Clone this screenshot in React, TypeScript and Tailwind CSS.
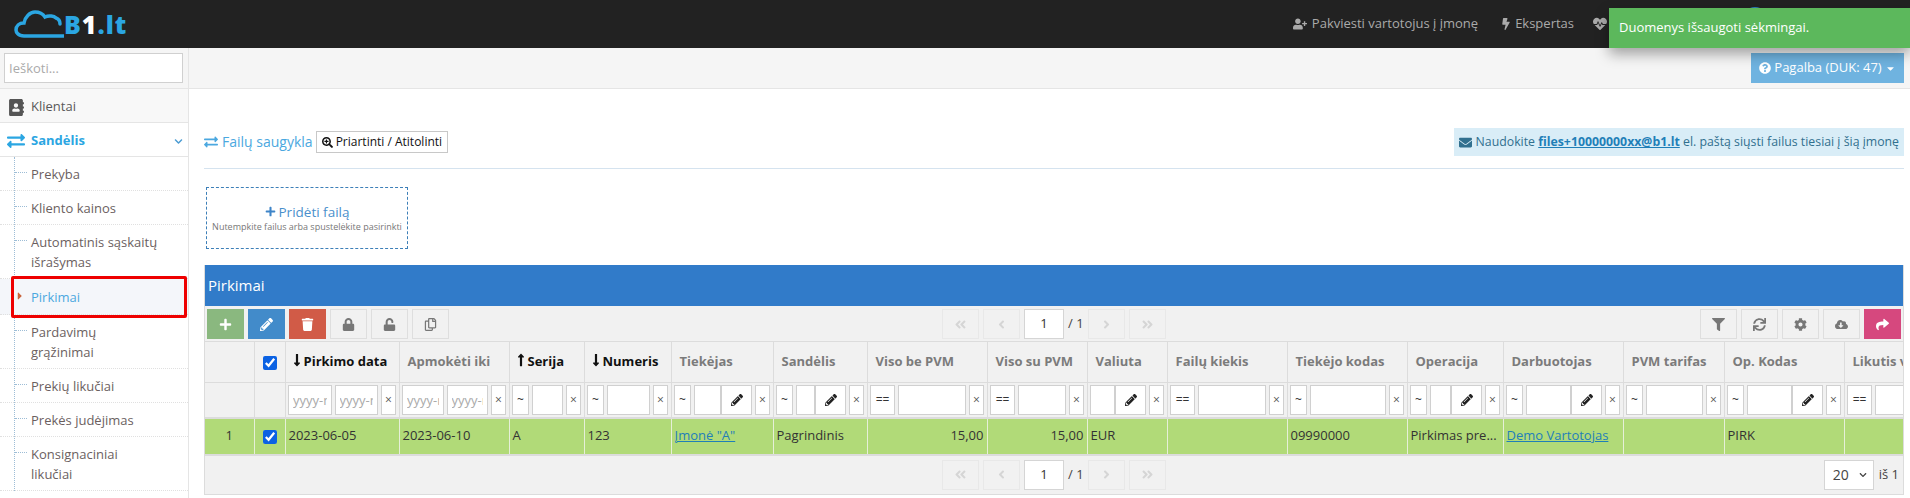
import type { ReactNode } from 'react'
import clsx from 'clsx'
import {
  FaAddressBook,
  FaAngleDoubleLeft,
  FaAngleDoubleRight,
  FaAngleLeft,
  FaAngleRight,
  FaBolt,
  FaCaretDown,
  FaCaretRight,
  FaChevronDown,
  FaCloudDownloadAlt,
  FaCog,
  FaEnvelope,
  FaExchangeAlt,
  FaFilter,
  FaHeartbeat,
  FaLock,
  FaLongArrowAltDown,
  FaLongArrowAltUp,
  FaPencilAlt,
  FaPlus,
  FaQuestionCircle,
  FaRegCopy,
  FaSearchPlus,
  FaShare,
  FaSync,
  FaTrash,
  FaUnlock,
  FaUserPlus,
} from 'react-icons/fa'

type FilterKind = 'date' | 'text' | 'pick' | 'eq' | 'pickOnly'

interface Column {
  label: string
  width: number
  sort?: 'up' | 'down'
  filter: FilterKind
  value?: ReactNode
  align?: 'right'
}

const link = 'text-[#1f7fb8] underline'

const columns: Column[] = [
  { label: 'Pirkimo data', width: 114, sort: 'down', filter: 'date', value: '2023-06-05' },
  { label: 'Apmokėti iki', width: 110, filter: 'date', value: '2023-06-10' },
  { label: 'Serija', width: 75, sort: 'up', filter: 'text', value: 'A' },
  { label: 'Numeris', width: 87, sort: 'down', filter: 'text', value: '123' },
  { label: 'Tiekėjas', width: 102, filter: 'pick', value: <a className={link}>Įmonė "A"</a> },
  { label: 'Sandėlis', width: 94, filter: 'pick', value: 'Pagrindinis' },
  { label: 'Viso be PVM', width: 120, filter: 'eq', value: '15,00', align: 'right' },
  { label: 'Viso su PVM', width: 100, filter: 'eq', value: '15,00', align: 'right' },
  { label: 'Valiuta', width: 80, filter: 'pickOnly', value: 'EUR' },
  { label: 'Failų kiekis', width: 120, filter: 'eq' },
  { label: 'Tiekėjo kodas', width: 120, filter: 'text', value: '09990000' },
  { label: 'Operacija', width: 96, filter: 'pick', value: 'Pirkimas pre...' },
  { label: 'Darbuotojas', width: 120, filter: 'pick', value: <a className={link}>Demo Vartotojas</a> },
  { label: 'PVM tarifas', width: 101, filter: 'text' },
  { label: 'Op. Kodas', width: 120, filter: 'pick', value: 'PIRK' },
  { label: 'Likutis v', width: 60, filter: 'eq' },
]

const menu = [
  { label: ['Prekyba'] },
  { label: ['Kliento kainos'] },
  { label: ['Automatinis sąskaitų', 'išrašymas'] },
  { label: ['Pirkimai'], active: true },
  { label: ['Pardavimų', 'grąžinimai'] },
  { label: ['Prekių likučiai'] },
  { label: ['Prekės judėjimas'] },
  { label: ['Konsignaciniai', 'likučiai'] },
]

const boxClass = 'h-[30px] border border-[#d0d0d0] bg-white'

function FilterInput({ placeholder, className }: { placeholder?: string; className?: string }) {
  return (
    <input
      readOnly
      placeholder={placeholder}
      className={clsx(boxClass, 'min-w-0 px-[4px] text-[13px] placeholder:text-[#aaa] outline-none', className)}
    />
  )
}

function OpBox({ text, wide }: { text: string; wide?: boolean }) {
  return (
    <span className={clsx(boxClass, wide ? 'w-[25px]' : 'w-[17px]', 'flex shrink-0 items-center justify-center text-[12px] text-[#333]')}>
      {text}
    </span>
  )
}

function ClearBox() {
  return <span className={clsx(boxClass, 'flex w-[15px] shrink-0 items-center justify-center text-[12px] text-[#555]')}>×</span>
}

function PickBox() {
  return (
    <span className={clsx(boxClass, '-ml-[3px] flex w-[31px] shrink-0 items-center justify-center text-[12px] text-[#222]')}>
      <FaPencilAlt />
    </span>
  )
}

function FilterCell({ kind, last }: { kind: FilterKind; last?: boolean }) {
  if (last) {
    return (
      <div className="flex w-[120px] gap-[3px]">
        <OpBox text="==" wide />
        <FilterInput className="flex-1" />
      </div>
    )
  }
  return (
    <div className="flex gap-[3px]">
      {kind === 'date' && <FilterInput placeholder="yyyy-mm-dd" className="w-0 flex-1" />}
      {kind === 'date' && <FilterInput placeholder="yyyy-mm-dd" className="w-0 flex-1" />}
      {(kind === 'text' || kind === 'pick') && <OpBox text="~" />}
      {kind === 'eq' && <OpBox text="==" wide />}
      {kind !== 'date' && <FilterInput className="w-0 flex-1" />}
      {(kind === 'pick' || kind === 'pickOnly') && <PickBox />}
      <ClearBox />
    </div>
  )
}

function ToolButton({ children, className }: { children: ReactNode; className?: string }) {
  return (
    <button className={clsx('flex h-[30px] w-[37px] items-center justify-center text-[13px]', className)}>
      {children}
    </button>
  )
}

const plainTool = 'border border-[#dedede] text-[#777777]'
const faintTool = 'border border-[#e8e8e8] text-[#d5d5d5]'

function Pager() {
  return (
    <div className="flex items-center gap-1">
      <ToolButton className={faintTool}><FaAngleDoubleLeft /></ToolButton>
      <ToolButton className={faintTool}><FaAngleLeft /></ToolButton>
      <span className="flex h-[30px] w-10 items-center justify-center border border-[#d5d5d5] bg-white text-[13px] text-[#333]">1</span>
      <span className="w-4 text-[13px] whitespace-nowrap text-[#444]">/ 1</span>
      <ToolButton className={faintTool}><FaAngleRight /></ToolButton>
      <ToolButton className={faintTool}><FaAngleDoubleRight /></ToolButton>
    </div>
  )
}

function Logo() {
  return (
    <div className="ml-[14px] flex items-end">
      <svg width="50" height="30" viewBox="0 0 50 30" fill="none" className="mb-[3px]">
        <path
          d="M50 27H10C4 27 2 23 2 21C2 17 5 14 10 14C11 8 16 3 21 3C26 3 29 5 31 8C35 6 40 7 42 9C45 10 46 12 46 15"
          stroke="#2ba6e2"
          strokeWidth="3.5"
          strokeLinecap="round"
        />
      </svg>
      <span className="text-[25px] leading-[36px] font-extrabold tracking-[1px] text-[#2ba6e2]">
        B<span className="text-white">1</span>.lt
      </span>
    </div>
  )
}

function Sidebar() {
  return (
    <aside className="w-[189px] shrink-0 border-r border-[#e5e5e5] bg-white">
      <div className="h-[41px] border-b border-[#e5e5e5] bg-[#f5f5f5] px-1 pt-[5px]">
        <input
          readOnly
          placeholder="Ieškoti..."
          className="h-[30px] w-[179px] border border-[#d0d0d0] bg-white px-1 text-[13px] placeholder:text-[#aaa] outline-none"
        />
      </div>
      <div className="flex h-[34px] items-center border-b border-[#e5e5e5] bg-[#f8f8f8] pt-[3px] pl-2 text-[13px] text-[#585858]">
        <FaAddressBook className="mr-[6px] text-[17px] text-[#555]" />
        Klientai
      </div>
      <div className="flex h-[34px] items-center border-b border-[#e5e5e5] pt-[3px] pr-[5px] pl-[7px] text-[13px] font-bold text-[#2ba6e2]">
        <FaExchangeAlt className="mr-[6px] text-[18px]" />
        <span className="flex-1">Sandėlis</span>
        <FaChevronDown className="text-[9px] text-[#4b9cd3]" />
      </div>
      <ul className="relative">
        <span className="absolute top-0 bottom-0 left-[14px] border-l border-dotted border-[#9dbdd6]" />
        {menu.map((item) => (
          <li
            key={item.label[0]}
            className={clsx(
              'relative border-b border-dotted border-[#e0e0e0] pl-[31px] text-[13px] leading-5',
              item.active ? 'bg-[#f4f6fa] py-[7.5px] text-[#4ba8e0]' : 'py-[6.5px] text-[#6b5f5f]'
            )}
          >
            {item.active ? (
              <FaCaretRight className="absolute top-[11px] left-[14px] text-[12px] text-[#c8643c]" />
            ) : (
              <span className="absolute top-[15px] left-[15px] w-3 border-t border-dotted border-[#9dbdd6]" />
            )}
            {item.label.map((line) => (
              <div key={line}>{line}</div>
            ))}
            {item.active && <span className="absolute -top-[3px] -bottom-[4px] left-[11px] right-[1px] rounded-[2px] border-[3px] border-[#ee0000]" />}
          </li>
        ))}
      </ul>
    </aside>
  )
}

function DataTable() {
  return (
    <div className="overflow-hidden">
      <table className="w-[1699px] table-fixed border-collapse text-[13px]">
        <colgroup>
          <col className="w-[49px]" />
          <col className="w-[31px]" />
          {columns.map((c) => (
            <col key={c.label} style={{ width: c.width }} />
          ))}
        </colgroup>
        <thead>
          <tr className="h-[41px] border-y border-[#dcdcdc]">
            <th className="border-r border-[#dcdcdc]" />
            <th className="border-r border-[#dcdcdc] text-center">
              <input type="checkbox" readOnly checked className="h-[14px] w-[14px] align-middle accent-[#0b62e3]" />
            </th>
            {columns.map((c) => (
              <th
                key={c.label}
                className={clsx(
                  'overflow-hidden whitespace-nowrap border-r border-[#dcdcdc] text-left font-bold',
                  c.sort ? 'pl-[6px] text-[#111]' : 'pl-2 text-[#7b7b7b]'
                )}
              >
                {c.sort === 'down' && <FaLongArrowAltDown className="mr-[2px] inline h-[14px] w-[10px] align-[-1px]" />}
                {c.sort === 'up' && <FaLongArrowAltUp className="mr-[2px] inline h-[14px] w-[10px] align-[-1px]" />}
                {c.label}
              </th>
            ))}
          </tr>
          <tr className="h-[35px] border-b-2 border-[#dcdcdc]">
            <td className="border-r border-[#dcdcdc]" />
            <td className="border-r border-[#dcdcdc]" />
            {columns.map((c, i) => (
              <td key={c.label} className="overflow-hidden border-r border-[#dcdcdc] px-[2.5px]">
                <FilterCell kind={c.filter} last={i === columns.length - 1} />
              </td>
            ))}
          </tr>
        </thead>
        <tbody>
          <tr className="h-[37px] border-b-2 border-[#dcdcdc] bg-[#b1da78] text-[#333]">
            <td className="border-r border-[#e6efd8] text-center">1</td>
            <td className="border-r border-[#e6efd8] text-center">
              <input type="checkbox" readOnly checked className="h-[14px] w-[14px] align-middle accent-[#0b62e3]" />
            </td>
            {columns.map((c) => (
              <td
                key={c.label}
                className={clsx(
                  'overflow-hidden whitespace-nowrap border-r border-[#e6efd8] px-[3px]',
                  c.align === 'right' && 'text-right'
                )}
              >
                {c.value}
              </td>
            ))}
          </tr>
        </tbody>
      </table>
    </div>
  )
}

export default function App() {
  return (
    <div className="relative flex h-[498px] w-[1910px] flex-col overflow-hidden bg-white font-['Open_Sans',sans-serif]">
      {/* Top bar */}
      <header className="flex h-12 shrink-0 items-center justify-between bg-[#222222]">
        <Logo />
        <div className="flex items-center text-[13px] text-[#aaaaaa]">
          <FaUserPlus className="mr-[5px] text-[14px]" />
          <span>Pakviesti vartotojus į įmonę</span>
          <FaBolt className="ml-[22px] mr-[3px] text-[12px]" />
          <span>Ekspertas</span>
          <FaHeartbeat className="ml-[19px] text-[14px]" />
          <span className="mb-2 ml-[135px] mr-[142px] h-[26px] w-[26px] rounded-full bg-[#2b7fc0]" />
        </div>
      </header>

      <div className="flex min-h-0 flex-1">
        <Sidebar />

        <main className="min-w-0 flex-1">
          <div className="flex h-[41px] justify-end border-b border-[#e5e5e5] bg-[#f5f5f5] pt-[5px] pr-[6px]">
            <button className="flex h-[30px] w-[153px] items-center justify-center gap-[3px] bg-[#6fb3e0] text-[13px] text-white">
              <FaQuestionCircle className="text-[12px]" />
              Pagalba (DUK: 47)
              <FaCaretDown className="text-[11px]" />
            </button>
          </div>

          <div className="pl-[15px] pr-[6px]">
            {/* Storage header */}
            <div className="mt-[39px] flex h-[41px] items-start justify-between border-b border-[#d5e3ef]">
              <div className="flex items-center">
                <FaExchangeAlt className="mr-[4px] text-[14px] text-[#4ba8e0]" />
                <span className="text-[14px] leading-7 text-[#4ba8e0]">Failų saugykla</span>
                <button className="ml-[3px] flex h-[22px] items-center gap-[3px] border border-[#c8c8c8] px-[5px] text-[12px] text-[#111]">
                  <FaSearchPlus className="text-[11px]" />
                  Priartinti / Atitolinti
                </button>
              </div>
              <div className="flex h-7 items-center bg-[#d9edf7] px-[5px] text-[12.3px] text-[#31708f]">
                <FaEnvelope className="mr-[4px] text-[13px]" />
                Naudokite&nbsp;<a className="font-bold text-[#1f7fb8] underline">files+10000000xx@b1.lt</a>&nbsp;el. paštą siųsti failus tiesiai į šią įmonę
              </div>
            </div>

            {/* Upload box */}
            <div className="mt-[18px] ml-[2px] flex h-[62px] w-[202px] flex-col items-center justify-center border border-dashed border-[#3d7fb8] pb-[1px]">
              <div className="flex items-center gap-[3px] text-[13.5px] leading-[18px] text-[#4a8fcc]">
                <FaPlus className="text-[11px] text-[#3d84c8]" />
                Pridėti failą
              </div>
              <div className="text-[9px] leading-3 whitespace-nowrap text-[#777]">
                Nutempkite failus arba spustelėkite pasirinkti
              </div>
            </div>

            {/* Purchases panel */}
            <section className="mt-[16px] border border-t-0 border-[#dcdcdc] bg-[#f1f1f1]">
              <h2 className="flex h-[41px] items-center bg-[#317bc9] pl-[3px] text-[15px] text-white">Pirkimai</h2>
              <div className="grid h-[35px] grid-cols-[1fr_auto_1fr] items-start pt-[3px] pr-[2px] pl-[2px]">
                <div className="flex gap-1">
                  <ToolButton className="bg-[#8ab87f] text-white"><FaPlus /></ToolButton>
                  <ToolButton className="bg-[#428bca] text-white"><FaPencilAlt /></ToolButton>
                  <ToolButton className="bg-[#d15b47] text-white"><FaTrash /></ToolButton>
                  <ToolButton className={plainTool}><FaLock /></ToolButton>
                  <ToolButton className={plainTool}><FaUnlock /></ToolButton>
                  <ToolButton className={plainTool}><FaRegCopy /></ToolButton>
                </div>
                <Pager />
                <div className="flex justify-end gap-1">
                  <ToolButton className={plainTool}><FaFilter /></ToolButton>
                  <ToolButton className={plainTool}><FaSync /></ToolButton>
                  <ToolButton className={plainTool}><FaCog /></ToolButton>
                  <ToolButton className={plainTool}><FaCloudDownloadAlt /></ToolButton>
                  <ToolButton className="bg-[#d6487e] text-white"><FaShare /></ToolButton>
                </div>
              </div>

              <DataTable />

              <div className="grid h-[38px] grid-cols-[1fr_auto_1fr] items-center">
                <span />
                <Pager />
                <div className="flex items-center justify-end gap-[5px] pr-[4px] text-[13px] text-[#444]">
                  <span className="flex h-[30px] w-[50px] items-center justify-between border border-[#d5d5d5] bg-white pr-[6px] pl-2 text-[14px]">
                    20
                    <FaChevronDown className="text-[8px]" />
                  </span>
                  iš 1
                </div>
              </div>
            </section>
          </div>
        </main>
      </div>

      {/* Toast */}
      <div className="absolute top-2 right-0 flex h-10 w-[301px] items-center bg-[#5cb85c] pl-[10px] text-[13px] text-white shadow-[0_6px_14px_rgba(0,0,0,0.35)]">
        Duomenys išsaugoti sėkmingai.
      </div>
    </div>
  )
}
